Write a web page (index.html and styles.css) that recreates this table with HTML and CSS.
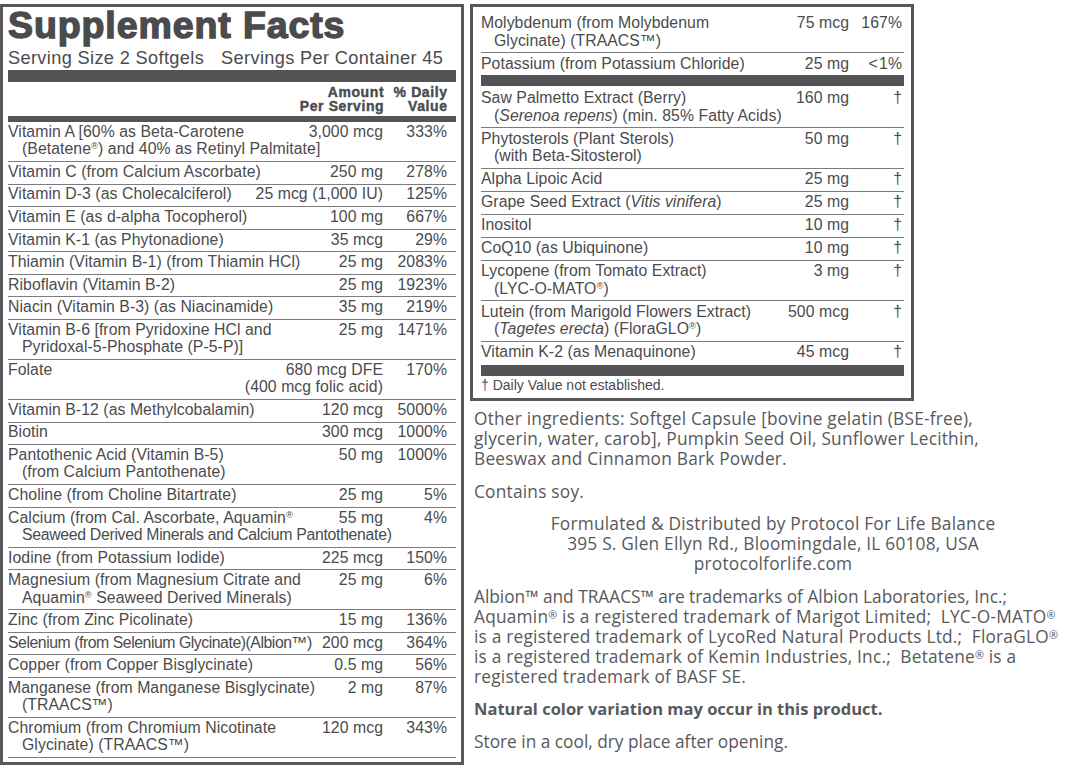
FILE: index.html
```html
<!DOCTYPE html>
<html lang="en">
<head>
<meta charset="utf-8">
<title>Supplement Facts</title>
<link rel="stylesheet" href="styles.css">
</head>
<body>
<div class="page">
  <section class="panel panel-left">
    <h1 class="title">Supplement Facts</h1>
    <div class="serving"><span>Serving Size 2 Softgels</span><span class="serving-gap">Servings Per Container 45</span></div>
    <div class="bar bar-thick"></div>
    <div class="head">
      <div class="head-amt">Amount<br>Per Serving</div>
      <div class="head-dv">% Daily<br>Value</div>
    </div>
    <div class="bar bar-mid"></div>

    <div class="rows rows-left">
      <div class="row"><div class="line"><span class="nm">Vitamin A [60% as Beta-Carotene</span><span class="amt">3,000 mcg</span><span class="dv">333%</span></div><div class="cont">(Betatene<sup>®</sup>) and 40% as Retinyl Palmitate]</div></div>
      <div class="row"><div class="line"><span class="nm">Vitamin C (from Calcium Ascorbate)</span><span class="amt">250 mg</span><span class="dv">278%</span></div></div>
      <div class="row"><div class="line"><span class="nm">Vitamin D-3 (as Cholecalciferol)</span><span class="amt">25 mcg (1,000 IU)</span><span class="dv">125%</span></div></div>
      <div class="row"><div class="line"><span class="nm">Vitamin E (as d-alpha Tocopherol)</span><span class="amt">100 mg</span><span class="dv">667%</span></div></div>
      <div class="row"><div class="line"><span class="nm">Vitamin K-1 (as Phytonadione)</span><span class="amt">35 mcg</span><span class="dv">29%</span></div></div>
      <div class="row"><div class="line"><span class="nm">Thiamin (Vitamin B-1) (from Thiamin HCl)</span><span class="amt">25 mg</span><span class="dv">2083%</span></div></div>
      <div class="row"><div class="line"><span class="nm">Riboflavin (Vitamin B-2)</span><span class="amt">25 mg</span><span class="dv">1923%</span></div></div>
      <div class="row"><div class="line"><span class="nm">Niacin (Vitamin B-3) (as Niacinamide)</span><span class="amt">35 mg</span><span class="dv">219%</span></div></div>
      <div class="row"><div class="line"><span class="nm">Vitamin B-6 [from Pyridoxine HCl and</span><span class="amt">25 mg</span><span class="dv">1471%</span></div><div class="cont">Pyridoxal-5-Phosphate (P-5-P)]</div></div>
      <div class="row"><div class="line"><span class="nm">Folate</span><span class="amt">680 mcg DFE</span><span class="dv">170%</span></div><div class="cont cont-amt">(400 mcg folic acid)</div></div>
      <div class="row"><div class="line"><span class="nm">Vitamin B-12 (as Methylcobalamin)</span><span class="amt">120 mcg</span><span class="dv">5000%</span></div></div>
      <div class="row"><div class="line"><span class="nm">Biotin</span><span class="amt">300 mcg</span><span class="dv">1000%</span></div></div>
      <div class="row"><div class="line"><span class="nm">Pantothenic Acid (Vitamin B-5)</span><span class="amt">50 mg</span><span class="dv">1000%</span></div><div class="cont">(from Calcium Pantothenate)</div></div>
      <div class="row"><div class="line"><span class="nm">Choline (from Choline Bitartrate)</span><span class="amt">25 mg</span><span class="dv">5%</span></div></div>
      <div class="row"><div class="line"><span class="nm">Calcium (from Cal. Ascorbate, Aquamin<sup>®</sup></span><span class="amt">55 mg</span><span class="dv">4%</span></div><div class="cont tight">Seaweed Derived Minerals and Calcium Pantothenate)</div></div>
      <div class="row"><div class="line"><span class="nm">Iodine (from Potassium Iodide)</span><span class="amt">225 mcg</span><span class="dv">150%</span></div></div>
      <div class="row"><div class="line"><span class="nm">Magnesium (from Magnesium Citrate and</span><span class="amt">25 mg</span><span class="dv">6%</span></div><div class="cont">Aquamin<sup>®</sup> Seaweed Derived Minerals)</div></div>
      <div class="row"><div class="line"><span class="nm">Zinc (from Zinc Picolinate)</span><span class="amt">15 mg</span><span class="dv">136%</span></div></div>
      <div class="row"><div class="line"><span class="nm tighter">Selenium (from Selenium Glycinate)(Albion™)</span><span class="amt">200 mcg</span><span class="dv">364%</span></div></div>
      <div class="row"><div class="line"><span class="nm">Copper (from Copper Bisglycinate)</span><span class="amt">0.5 mg</span><span class="dv">56%</span></div></div>
      <div class="row"><div class="line"><span class="nm">Manganese (from Manganese Bisglycinate)</span><span class="amt">2 mg</span><span class="dv">87%</span></div><div class="cont">(TRAACS™)</div></div>
      <div class="row"><div class="line"><span class="nm">Chromium (from Chromium Nicotinate</span><span class="amt">120 mcg</span><span class="dv">343%</span></div><div class="cont">Glycinate) (TRAACS™)</div></div>
    </div>
  </section>

  <div class="rightcol">
    <section class="panel panel-right">
      <div class="rows rows-right">
        <div class="row"><div class="line"><span class="nm">Molybdenum (from Molybdenum</span><span class="amt">75 mcg</span><span class="dv">167%</span></div><div class="cont">Glycinate) (TRAACS™)</div></div>
        <div class="row row-last"><div class="line"><span class="nm">Potassium (from Potassium Chloride)</span><span class="amt">25 mg</span><span class="dv">&lt;&#8202;1%</span></div></div>
      </div>
      <div class="bar bar-r1"></div>
      <div class="rows rows-right">
        <div class="row"><div class="line"><span class="nm">Saw Palmetto Extract (Berry)</span><span class="amt">160 mg</span><span class="dv">†</span></div><div class="cont">(<i>Serenoa repens</i>) (min. 85% Fatty Acids)</div></div>
        <div class="row"><div class="line"><span class="nm">Phytosterols (Plant Sterols)</span><span class="amt">50 mg</span><span class="dv">†</span></div><div class="cont">(with Beta-Sitosterol)</div></div>
        <div class="row"><div class="line"><span class="nm">Alpha Lipoic Acid</span><span class="amt">25 mg</span><span class="dv">†</span></div></div>
        <div class="row"><div class="line"><span class="nm">Grape Seed Extract (<i>Vitis vinifera</i>)</span><span class="amt">25 mg</span><span class="dv">†</span></div></div>
        <div class="row"><div class="line"><span class="nm">Inositol</span><span class="amt">10 mg</span><span class="dv">†</span></div></div>
        <div class="row"><div class="line"><span class="nm">CoQ10 (as Ubiquinone)</span><span class="amt">10 mg</span><span class="dv">†</span></div></div>
        <div class="row"><div class="line"><span class="nm">Lycopene (from Tomato Extract)</span><span class="amt">3 mg</span><span class="dv">†</span></div><div class="cont">(LYC-O-MATO<sup>®</sup>)</div></div>
        <div class="row"><div class="line"><span class="nm">Lutein (from Marigold Flowers Extract)</span><span class="amt">500 mcg</span><span class="dv">†</span></div><div class="cont">(<i>Tagetes erecta</i>) (FloraGLO<sup>®</sup>)</div></div>
        <div class="row row-last"><div class="line"><span class="nm">Vitamin K-2 (as Menaquinone)</span><span class="amt">45 mcg</span><span class="dv">†</span></div></div>
      </div>
      <div class="bar bar-r2"></div>
      <div class="footnote">† Daily Value not established.</div>
    </section>

    <div class="notes">
      <p>Other ingredients: Softgel Capsule [bovine gelatin (BSE-free),<br>glycerin, water, carob], Pumpkin Seed Oil, Sunflower Lecithin,<br>Beeswax and Cinnamon Bark Powder.</p>
      <p>Contains soy.</p>
      <p class="center">Formulated &amp; Distributed by Protocol For Life Balance<br>395 S. Glen Ellyn Rd., Bloomingdale, IL 60108, USA<br>protocolforlife.com</p>
      <p><span class="plain">Albion™ and TRAACS™ are trademarks of Albion Laboratories, Inc.;</span><br>Aquamin<sup>®</sup> is a registered trademark of Marigot Limited;&nbsp; LYC-O-MATO<sup>®</sup><br>is a registered trademark of LycoRed Natural Products Ltd.;&nbsp; FloraGLO<sup>®</sup><br>is a registered trademark of Kemin Industries, Inc.;&nbsp; Betatene<sup>®</sup> is a<br>registered trademark of BASF SE.</p>
      <p class="bold">Natural color variation may occur in this product.</p>
      <p class="plain">Store in a cool, dry place after opening.</p>
    </div>
  </div>
</div>
</body>
</html>
```

FILE: styles.css
```css
html, body {
  margin: 0;
  padding: 0;
  background: #ffffff;
  overflow: hidden;
}

body {
  font-family: "Liberation Sans", Arial, sans-serif;
  color: #4b4b4d;
}

.page {
  display: flex;
  align-items: flex-start;
  gap: 6px;
  padding-top: 4px;
}

.panel {
  box-sizing: border-box;
  border: 3px solid #58585a;
  background: #fff;
}

/* ---------- left panel ---------- */
.panel-left {
  width: 464px;
  flex-shrink: 0;
  padding: 0 5px 4px 5px;
}

.title {
  margin: 0;
  font-size: 37.5px;
  line-height: 36px;
  font-weight: 700;
  letter-spacing: 0.9px;
  -webkit-text-stroke: 1.4px #4b4b4d;
  color: #4b4b4d;
  white-space: nowrap;
}

.serving {
  margin-top: 5px;
  font-size: 18.2px;
  line-height: 20px;
  letter-spacing: 0.35px;
  white-space: nowrap;
}

.serving-gap {
  margin-left: 17px;
}

.bar {
  background: #545456;
}

.bar-thick {
  margin-top: 2px;
  height: 12px;
}

.head {
  display: flex;
  justify-content: flex-end;
  padding: 2.5px 9px 0 0;
  font-size: 14px;
  line-height: 14px;
  font-weight: 700;
  letter-spacing: 0.6px;
  -webkit-text-stroke: 0.4px #4b4b4d;
  text-align: right;
}

.head-amt {
  margin-right: -0.6px;
}

.head-dv {
  width: 64px;
  margin-right: -0.6px;
}

.bar-mid {
  margin-top: 3.5px;
  height: 6px;
}

/* ---------- rows ---------- */
.rows {
  font-size: 15.8px;
  line-height: 17.5px;
  letter-spacing: 0.06px;
}

.row {
  border-bottom: 1px solid #7c7c7e;
  white-space: nowrap;
}

.rows-left .row {
  padding: 0.9px 9px 3.17px 0;
}

.line {
  display: flex;
}

.nm {
  flex: 1;
  min-width: 0;
}

.amt {
  flex-shrink: 0;
  text-align: right;
}

.rows-left .dv {
  width: 64px;
  flex-shrink: 0;
  text-align: right;
}

.cont {
  padding-left: 14px;
}

.cont-amt {
  padding-left: 0;
  padding-right: 64px;
  text-align: right;
}

.tight {
  letter-spacing: -0.3px;
}

.tighter {
  letter-spacing: -0.45px;
}

sup {
  font-size: 60%;
  line-height: 0;
  vertical-align: 0.5em;
}

/* ---------- right panel ---------- */
.rightcol {
  width: 602px;
  flex-shrink: 0;
}

.panel-right {
  width: 444px;
  padding: 6px 7px 0 8px;
}

.rows-right .row {
  padding: 1.2px 2px 3.3px 0;
}

.rows-right .dv {
  width: 53px;
  flex-shrink: 0;
  text-align: right;
}

.rows-right .cont {
  padding-left: 13px;
}

.row-last {
  border-bottom: none;
}

.bar-r1 {
  height: 11px;
  margin-bottom: 1.5px;
}

.bar-r2 {
  height: 11px;
  margin-top: 1px;
}

.footnote {
  font-size: 14px;
  line-height: 16px;
  padding: 1.5px 0 4.8px;
}

/* ---------- notes ---------- */
.notes {
  padding: 8px 0 0 4px;
  font-family: "Open Sans", Lato, sans-serif;
  font-size: 17.3px;
  line-height: 20px;
  letter-spacing: 0.22px;
  color: #58595b;
}

.notes p {
  margin: 0 0 12.5px 0;
  white-space: nowrap;
}

.notes sup {
  font-size: 62%;
  vertical-align: 0.38em;
}

.notes .plain {
  letter-spacing: 0;
}

.notes .center {
  text-align: center;
}

.notes .bold {
  font-size: 16.5px;
  font-weight: 700;
  letter-spacing: 0;
}
```
